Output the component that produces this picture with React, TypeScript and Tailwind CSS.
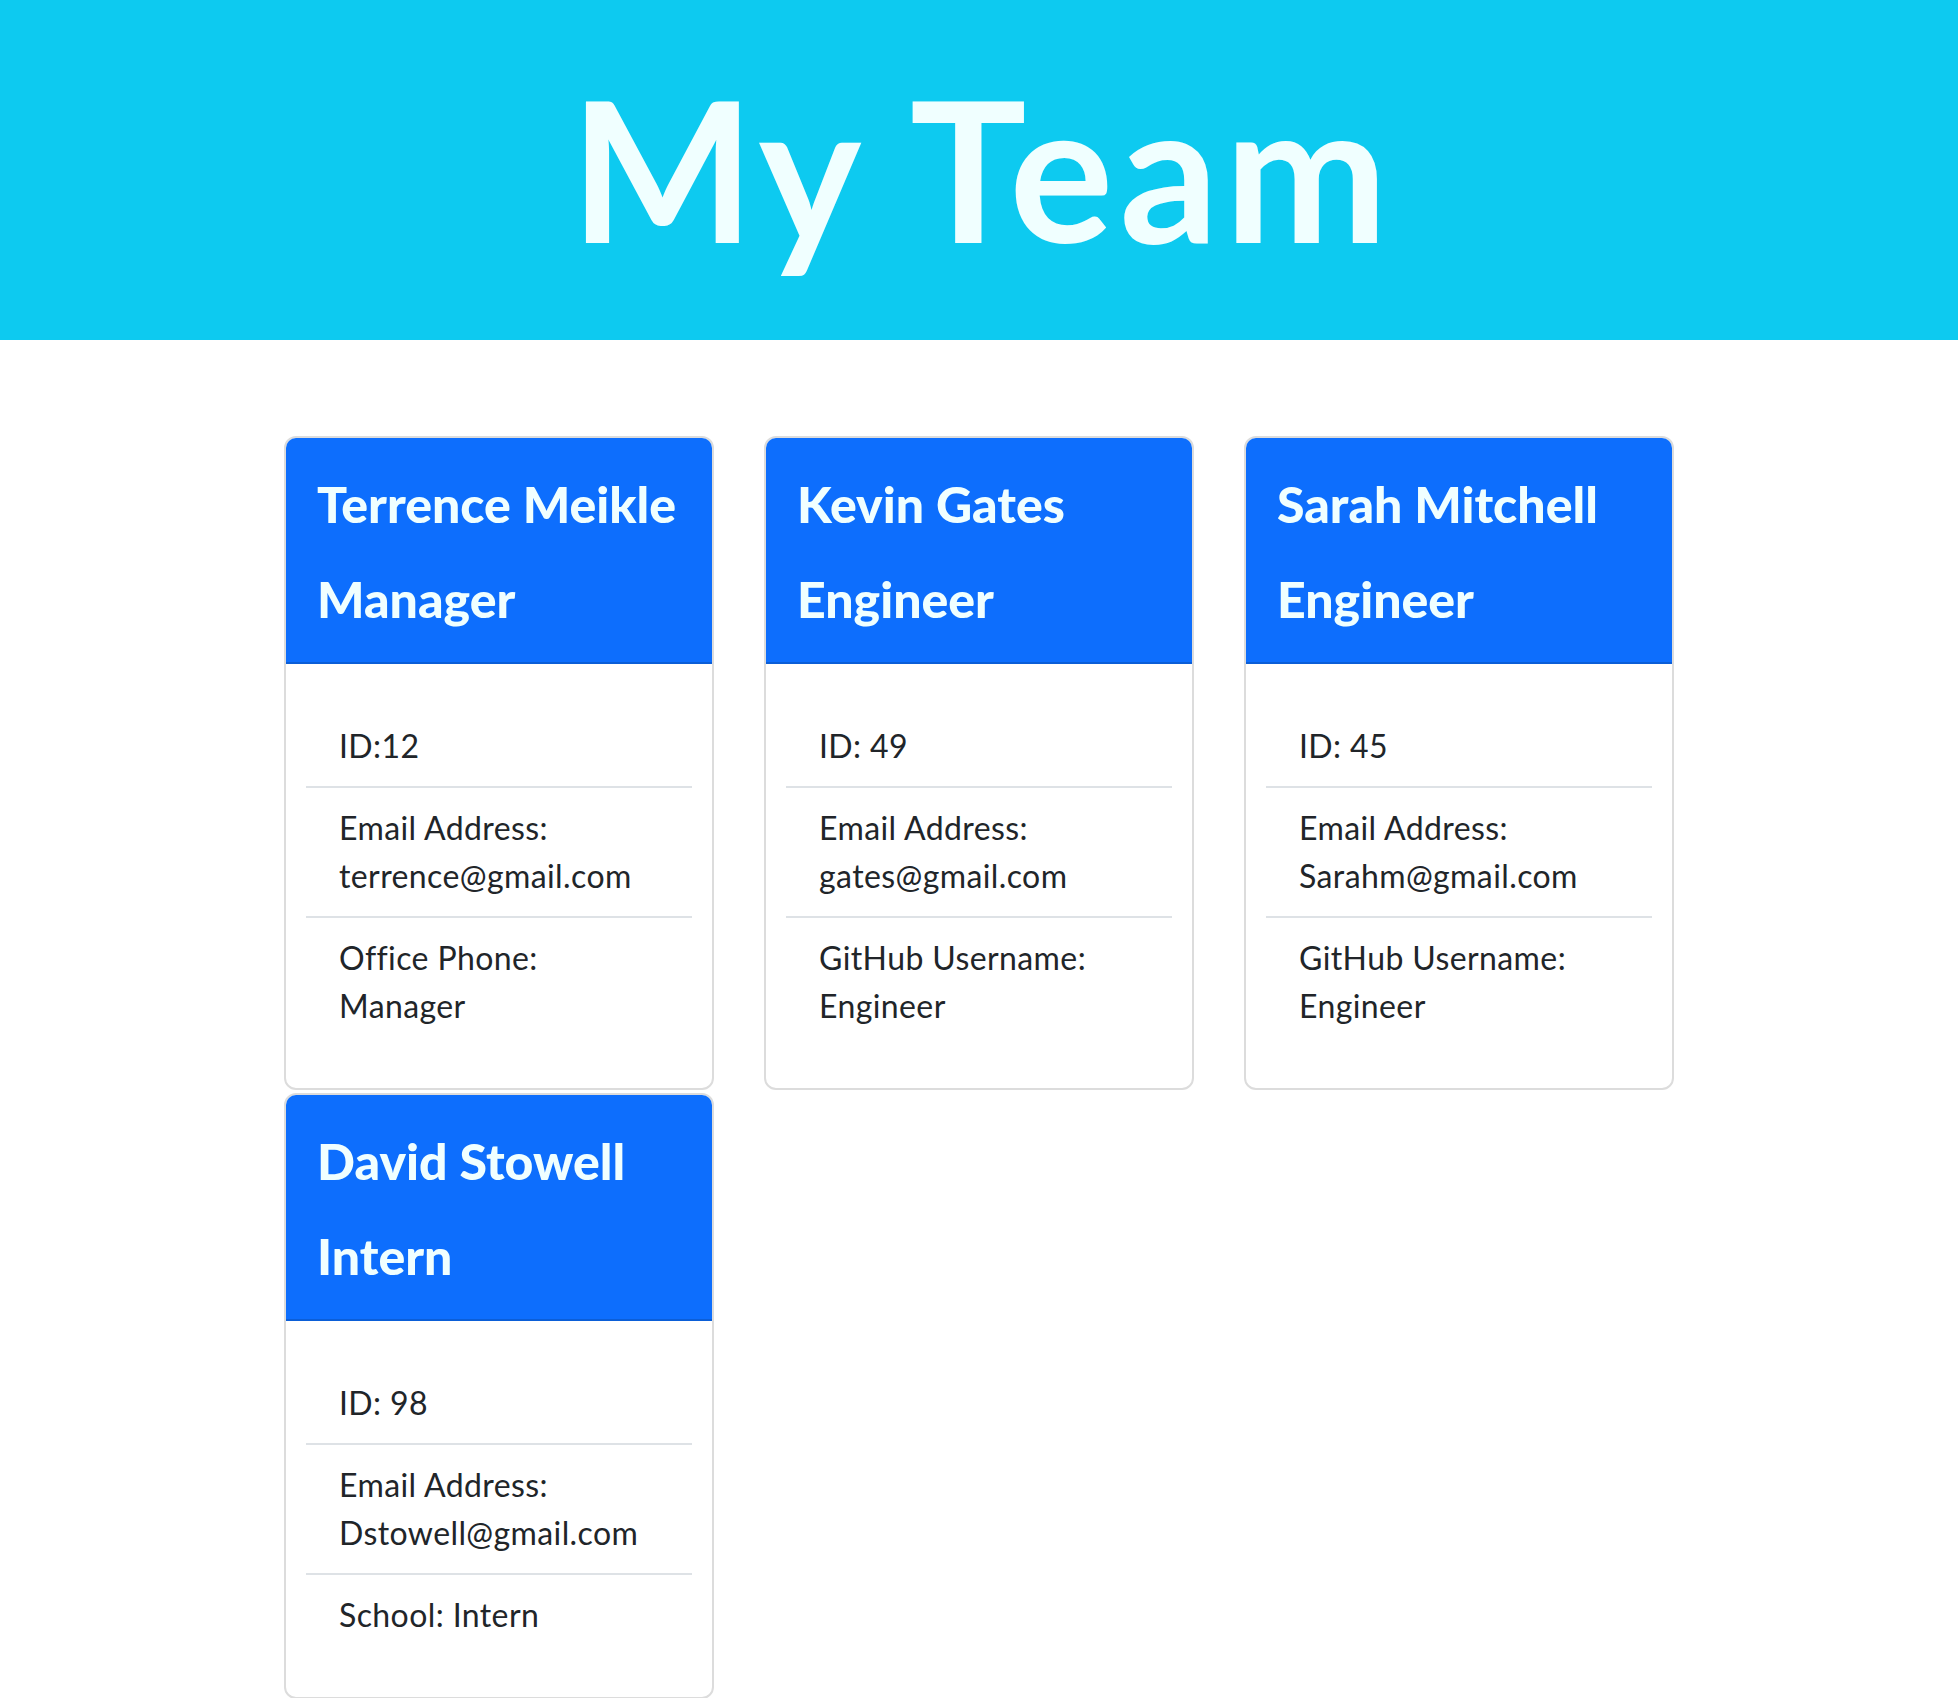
type Member = {
  name: string;
  role: string;
  id: string;
  email: string;
  extraLabel: string;
  extraValue: string;
  wrapExtra: boolean;
};

const team: Member[] = [
  {
    name: "Terrence Meikle",
    role: "Manager",
    id: "ID:12",
    email: "terrence@gmail.com",
    extraLabel: "Office Phone:",
    extraValue: "Manager",
    wrapExtra: true,
  },
  {
    name: "Kevin Gates",
    role: "Engineer",
    id: "ID: 49",
    email: "gates@gmail.com",
    extraLabel: "GitHub Username:",
    extraValue: "Engineer",
    wrapExtra: true,
  },
  {
    name: "Sarah Mitchell",
    role: "Engineer",
    id: "ID: 45",
    email: "Sarahm@gmail.com",
    extraLabel: "GitHub Username:",
    extraValue: "Engineer",
    wrapExtra: true,
  },
  {
    name: "David Stowell",
    role: "Intern",
    id: "ID: 98",
    email: "Dstowell@gmail.com",
    extraLabel: "School:",
    extraValue: "Intern",
    wrapExtra: false,
  },
];

function MemberCard({ member }: { member: Member }) {
  return (
    <div className="w-[430px] overflow-hidden rounded-[12px] border-2 border-[#dcdcdc] bg-white">
      <div className="border-b-2 border-[#0b5ed7] bg-[#0d6efd] px-[31px] pt-[36px] pb-[33px] text-[#f0ffff]">
        <h2 className="text-[50px] leading-[60px] font-black">{member.name}</h2>
        <h3 className="mt-[35px] text-[50px] leading-[60px] font-black">{member.role}</h3>
      </div>
      <div className="px-[20px] py-[42px]">
        <ul className="text-[32px] leading-[48px] tracking-[0.4px] text-[#212529]">
          <li className="border-b-2 border-[#dee2e6] px-[33px] py-[16px]">{member.id}</li>
          <li className="border-b-2 border-[#dee2e6] px-[33px] py-[16px]">
            <span className="block">Email Address:</span>
            <span className="block">{member.email}</span>
          </li>
          <li className="px-[33px] py-[16px]">
            {member.wrapExtra ? (
              <>
                <span className="block">{member.extraLabel}</span>
                <span className="block">{member.extraValue}</span>
              </>
            ) : (
              <span>
                {member.extraLabel} {member.extraValue}
              </span>
            )}
          </li>
        </ul>
      </div>
    </div>
  );
}

export default function App() {
  return (
    <div className="min-h-screen bg-white font-[Lato,sans-serif]">
      <header className="h-[340px] bg-[#0dcaf0] pt-[71px] pl-[6px] text-center">
        <h1 className="text-[195px] leading-none font-bold tracking-[6px] text-[#f0ffff]">My Team</h1>
      </header>
      <main className="mx-auto mt-[96px] flex w-[1390px] flex-wrap gap-x-[50px] gap-y-[3px]">
        {team.map((member) => (
          <MemberCard key={member.name} member={member} />
        ))}
      </main>
    </div>
  );
}
